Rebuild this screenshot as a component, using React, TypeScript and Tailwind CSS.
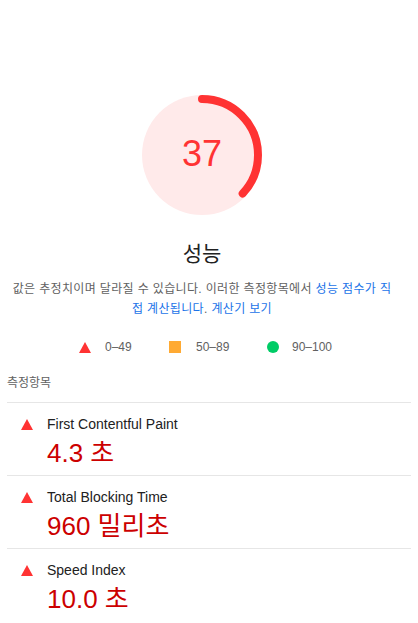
import React from "react";

const FONT = { fontFamily: '"Liberation Sans", Arial, "Noto Sans CJK KR", sans-serif' };

function Gauge({ score }: { score: number }) {
    const r = 56;
    const c = 2 * Math.PI * r;
    return (
        <div className="relative w-[120px] h-[120px]">
            <svg viewBox="0 0 120 120" className="w-[120px] h-[120px] -rotate-90">
                <circle cx="60" cy="60" r="60" fill="#ffeaea" />
                <circle
                    cx="60"
                    cy="60"
                    r={r}
                    fill="none"
                    stroke="#ff3333"
                    strokeWidth="8"
                    strokeLinecap="round"
                    strokeDasharray={`${(score / 100) * c} ${c}`}
                />
            </svg>
            <div className="absolute inset-0 flex items-center justify-center text-[36px] text-[#ff3333] leading-none pb-[2px]">
                {score}
            </div>
        </div>
    );
}

function Triangle({ size = 12 }: { size?: number }) {
    return (
        <svg width={size} height={size} viewBox="0 0 12 12">
            <polygon points="6,1 12,12 0,12" fill="#ff3333" />
        </svg>
    );
}

const metrics = [
    { title: "First Contentful Paint", value: "4.3 초" },
    { title: "Total Blocking Time", value: "960 밀리초" },
    { title: "Speed Index", value: "10.0 초" },
];

export default function App() {
    return (
        <div className="w-[418px] h-[623px] bg-white overflow-hidden" style={FONT}>
            <div className="w-[404px] flex flex-col items-center pt-[95px]">
                <Gauge score={37} />
                <div className="mt-[25px] text-[21px] text-[#212121] leading-[28px]">성능</div>
                <p className="mt-[11px] text-center text-[12px] leading-[20px] text-[#616161] tracking-[0.35px] whitespace-nowrap">
                    값은 추정치이며 달라질 수 있습니다. 이러한 측정항목에서{" "}
                    <span className="text-[#1a73e8]">성능 점수가 직</span>
                    <br />
                    <span className="text-[#1a73e8]">접 계산됩니다</span>.{" "}
                    <span className="text-[#1a73e8]">계산기 보기</span>
                </p>
            </div>
            <div className="mt-[20px] pl-[79px] flex items-center text-[12px] text-[#616161] leading-[16px]">
                <div className="flex items-center w-[90px]">
                    <Triangle />
                    <span className="ml-[14px]">0–49</span>
                </div>
                <div className="flex items-center w-[98px]">
                    <span className="w-[12px] h-[12px] bg-[#ffaa33]" />
                    <span className="ml-[15px]">50–89</span>
                </div>
                <div className="flex items-center">
                    <span className="w-[12px] h-[12px] rounded-full bg-[#00cc66]" />
                    <span className="ml-[13px]">90–100</span>
                </div>
            </div>
            <div className="mt-[20px] px-[7px]">
                <div className="text-[12px] text-[#616161] leading-[16px] pb-[11px]">측정항목</div>
                {metrics.map((m) => (
                    <div key={m.title} className="border-t border-[#e6e6e6] h-[73px] pt-[12px]">
                        <div className="flex items-center h-[18px]">
                            <div className="w-[40px] pl-[14px]">
                                <Triangle />
                            </div>
                            <span className="text-[14px] text-[#212121]">{m.title}</span>
                        </div>
                        <div className="pl-[40px] mt-[5px] text-[26px] leading-[30px] text-[#cc0000]">
                            {m.value}
                        </div>
                    </div>
                ))}
            </div>
        </div>
    );
}
